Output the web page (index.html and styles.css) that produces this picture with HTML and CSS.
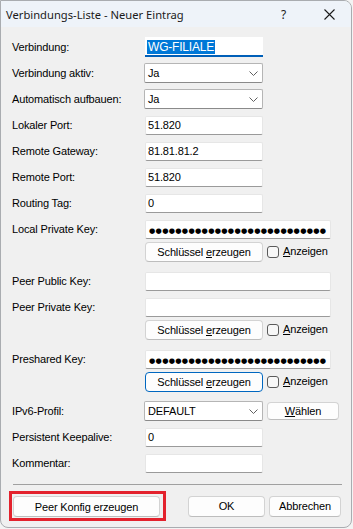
FILE: index.html
```html
<!DOCTYPE html>
<html lang="de">
<head>
<meta charset="utf-8">
<title>Verbindungs-Liste - Neuer Eintrag</title>
<link rel="stylesheet" href="styles.css">
</head>
<body>
<div class="window">
  <div class="titlebar">
    <span class="title">Verbindungs-Liste - Neuer Eintrag</span>
    <span class="help">?</span>
    <span class="close"><svg width="11" height="11" viewBox="0 0 11 11"><path d="M0.5 0.5 L10.5 10.5 M10.5 0.5 L0.5 10.5" stroke="#1a1a1a" stroke-width="1.1" fill="none"/></svg></span>
  </div>
  <div class="content">
    <div class="row"><span class="lbl">Verbindung:</span><div class="input focus"><span class="sel">WG-FILIALE</span></div></div>
    <div class="row"><span class="lbl">Verbindung aktiv:</span><div class="combo"><span>Ja</span><svg class="chev" width="9" height="5" viewBox="0 0 9 5"><path d="M0.5 0.5 L4.5 4.5 L8.5 0.5" stroke="#606060" fill="none"/></svg></div></div>
    <div class="row"><span class="lbl">Automatisch aufbauen:</span><div class="combo"><span>Ja</span><svg class="chev" width="9" height="5" viewBox="0 0 9 5"><path d="M0.5 0.5 L4.5 4.5 L8.5 0.5" stroke="#606060" fill="none"/></svg></div></div>
    <div class="row"><span class="lbl">Lokaler Port:</span><div class="input">51.820</div></div>
    <div class="row"><span class="lbl">Remote Gateway:</span><div class="input">81.81.81.2</div></div>
    <div class="row"><span class="lbl">Remote Port:</span><div class="input">51.820</div></div>
    <div class="row"><span class="lbl">Routing Tag:</span><div class="input">0</div></div>
    <div class="row"><span class="lbl">Local Private Key:</span><div class="input wide"><span class="dots">●●●●●●●●●●●●●●●●●●●●●●●●●●●</span></div></div>
    <div class="row btnrow"><span></span><div class="ctrls"><button class="btn key">Schlüssel <u>e</u>rzeugen</button><span class="chk"><span class="box"></span><span class="chktext"><u>A</u>nzeigen</span></span></div></div>
    <div class="row"><span class="lbl">Peer Public Key:</span><div class="input wide"></div></div>
    <div class="row"><span class="lbl">Peer Private Key:</span><div class="input wide"></div></div>
    <div class="row btnrow"><span></span><div class="ctrls"><button class="btn key">Schlüssel <u>e</u>rzeugen</button><span class="chk"><span class="box"></span><span class="chktext"><u>A</u>nzeigen</span></span></div></div>
    <div class="row"><span class="lbl">Preshared Key:</span><div class="input wide"><span class="dots">●●●●●●●●●●●●●●●●●●●●●●●●●●●</span></div></div>
    <div class="row btnrow"><span></span><div class="ctrls"><button class="btn key default">Schlüssel <u>e</u>rzeugen</button><span class="chk"><span class="box"></span><span class="chktext"><u>A</u>nzeigen</span></span></div></div>
    <div class="row"><span class="lbl">IPv6-Profil:</span><div class="ctrls"><div class="combo"><span>DEFAULT</span><svg class="chev" width="9" height="5" viewBox="0 0 9 5"><path d="M0.5 0.5 L4.5 4.5 L8.5 0.5" stroke="#606060" fill="none"/></svg></div><button class="btn choose"><u>W</u>ählen</button></div></div>
    <div class="row"><span class="lbl">Persistent Keepalive:</span><div class="input">0</div></div>
    <div class="row"><span class="lbl">Kommentar:</span><div class="input"></div></div>
    <div class="sep"></div>
    <div class="footer">
      <div class="mark"><button class="btn peer">Peer Konfig erzeugen</button></div>
      <div class="right">
        <button class="btn ok">OK</button>
        <button class="btn cancel">Abbrechen</button>
      </div>
    </div>
  </div>
</div>
</body>
</html>
```

FILE: styles.css
```css
html, body {
  margin: 0;
  padding: 0;
  background: #f3f3f3;
}
body {
  width: 353px;
  height: 529px;
  overflow: hidden;
  font-family: "Liberation Sans", Arial, sans-serif;
  font-size: 11px;
  letter-spacing: -0.15px;
  color: #000;
}
.window {
  width: 350px;
  height: 526px;
  background: #f0f0f0;
  border: 1px solid #a9acb0;
  border-radius: 0 8px 8px 8px;
  overflow: hidden;
}
.titlebar {
  height: 26px;
  background: #eef3f9;
  display: flex;
  align-items: center;
}
.title {
  font-family: "Noto Sans", "Open Sans", sans-serif;
  font-size: 11.2px;
  letter-spacing: 0;
  color: #1a1a1a;
  padding-left: 5px;
  flex: 1;
}
.help {
  font-family: "Noto Sans", sans-serif;
  font-size: 12px;
  color: #1a1a1a;
  width: 43px;
}
.close {
  width: 27px;
  display: flex;
  align-items: center;
  height: 26px;
  padding-top: 1px;
}
.content {
  padding: 10px 9px 0 11px;
}
.row {
  display: grid;
  grid-template-columns: 133px 1fr;
  align-items: center;
  height: 20px;
  margin-bottom: 6px;
}
.lbl {
  white-space: nowrap;
}
.input {
  box-sizing: border-box;
  width: 118px;
  height: 19px;
  background: #fff;
  border: 1px solid #e6e6e6;
  border-bottom-color: #9a9a9a;
  border-radius: 2px;
  padding: 0 2px;
  line-height: 17px;
  white-space: nowrap;
  overflow: hidden;
}
.input.wide {
  width: 186px;
}
.input.focus {
  height: 20px;
  border: 0;
  border-bottom: 2px solid #005fb8;
  border-radius: 0;
  background: #fff;
  padding: 3px 2px 0 2px;
  line-height: 14px;
}
.sel {
  display: inline-block;
  background: #0078d7;
  color: #fff;
  padding: 0 1px;
  font-size: 12px;
  letter-spacing: -0.2px;
}
.dots {
  font-family: "DejaVu Sans", sans-serif;
  font-size: 7.2px;
  letter-spacing: 0.3px;
  color: #000;
  padding-left: 1px;
}
.combo {
  box-sizing: border-box;
  width: 119px;
  height: 20px;
  margin-left: -1px;
  background: #fff;
  border: 1px solid #b5b5b5;
  border-bottom-color: #8a8a8a;
  border-radius: 2px;
  display: flex;
  align-items: center;
  justify-content: space-between;
  padding: 0 4px 0 3px;
}
.combo span {
  line-height: 18px;
}
.chev {
  display: block;
}
.ctrls {
  display: flex;
  align-items: center;
  gap: 4px;
}
.btnrow {
  margin-top: -3px;
  margin-bottom: 9px;
}
.btn {
  box-sizing: border-box;
  font-family: "Liberation Sans", Arial, sans-serif;
  font-size: 11px;
  letter-spacing: -0.15px;
  color: #000;
  background: #fdfdfd;
  border: 1px solid #d3d3d3;
  border-bottom-color: #bdbdbd;
  border-radius: 4px;
  height: 20px;
  padding: 0;
  margin: 0;
}
.btn.key {
  width: 118px;
}
.btn.default {
  border-color: #0067c0;
}
.btn.choose {
  width: 72px;
  height: 18px;
}
.chk {
  display: flex;
  align-items: center;
  gap: 4px;
  margin-top: -2px;
}
.box {
  box-sizing: border-box;
  width: 12px;
  height: 12px;
  border: 1px solid #5a5a5a;
  border-radius: 3px;
  background: #f7f7f7;
  margin-top: 2px;
}
.chktext {
  white-space: nowrap;
}
.sep {
  height: 1px;
  background: #a0a0a0;
  margin: 11px 0 0 1px;
  width: 329px;
}
.footer {
  display: flex;
  justify-content: space-between;
  align-items: center;
  margin-top: 6px;
  margin-left: -3px;
}
.mark {
  border: 3px solid #e3222d;
  padding: 2px 3px 1px 1px;
}
.btn.peer {
  width: 147px;
  height: 21px;
  display: block;
}
.right {
  display: flex;
  gap: 4px;
  margin-right: 1px;
}
.btn.ok {
  width: 77px;
  height: 21px;
}
.btn.cancel {
  width: 72px;
  height: 21px;
}
u {
  text-decoration: underline;
  text-underline-offset: 1px;
}
```
